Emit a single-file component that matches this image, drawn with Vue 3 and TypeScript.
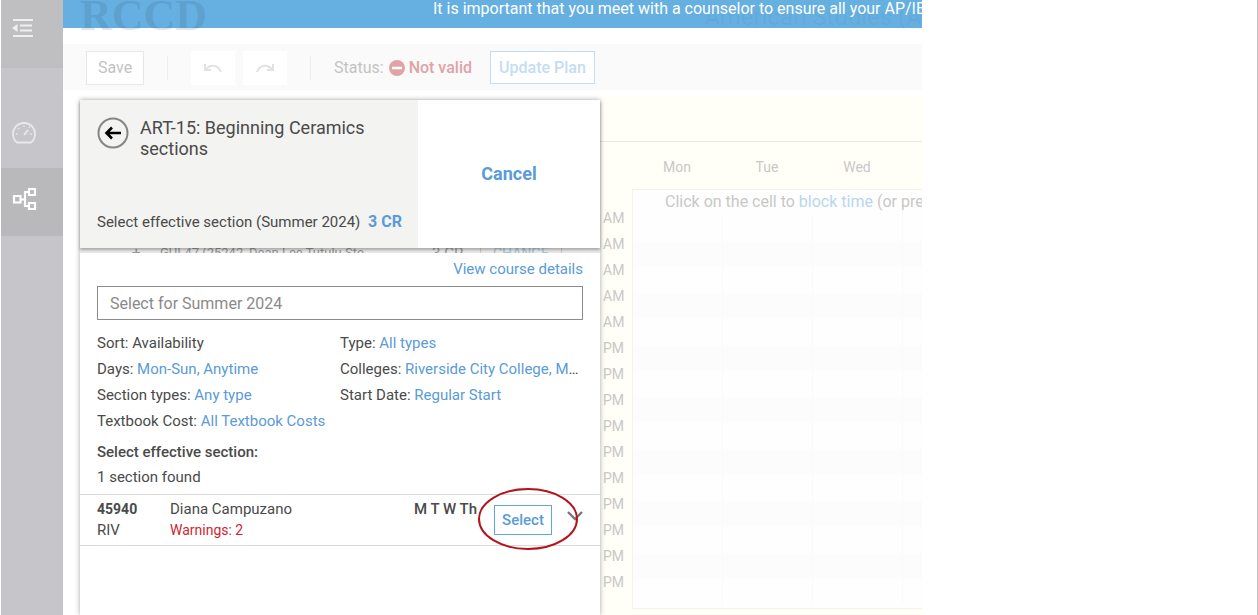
<script setup lang="ts">
import { ref } from 'vue'

interface Filter {
  label: string
  value: string
  link: boolean
}

const leftFilters: Filter[] = [
  { label: 'Sort:', value: 'Availability', link: false },
  { label: 'Days:', value: 'Mon-Sun, Anytime', link: true },
  { label: 'Section types:', value: 'Any type', link: true },
  { label: 'Textbook Cost:', value: 'All Textbook Costs', link: true },
]
const rightFilters: Filter[] = [
  { label: 'Type:', value: 'All types', link: true },
  { label: 'Colleges:', value: 'Riverside City College, Moreno Valley College', link: true },
  { label: 'Start Date:', value: 'Regular Start', link: true },
]
const hours: string[] = [...Array(5).fill('AM'), ...Array(10).fill('PM')]
const days: string[] = ['Mon', 'Tue', 'Wed', '']
const query = ref('')
</script>

<template>
  <div class="app">
    <nav class="sidebar" aria-label="Main">
      <button class="nav menu" aria-label="Collapse menu">
        <svg width="22" height="20" viewBox="0 0 22 20" fill="none" stroke="#efeff1" stroke-width="1.8">
          <path d="M1 2h20M8 7.500h12M8 12.500h12M1 18h20" />
          <path d="M5.500 6v8L0 10z" fill="#efeff1" stroke="none" />
        </svg>
      </button>
      <button class="nav gauge" aria-label="Dashboard">
        <svg width="24" height="24" viewBox="0 0 24 24" fill="none" stroke="#e9e9ec" stroke-width="1.8">
          <path d="M5 21.500A11 11 0 1 1 19 21.500z" stroke-linejoin="round" />
          <path d="M12 14l4-5" stroke-width="2" />
          <path d="M4 13h1.500M6 7l1 1M12 4.500v1.500M17 6.500l1-1M18.500 13H20" stroke-width="1.400" />
        </svg>
      </button>
      <button class="nav plan" aria-label="Plan">
        <svg width="26" height="24" viewBox="0 0 26 24" fill="none" stroke="#fff" stroke-width="2.200">
          <path d="M2 9h6.500v6.500H2zM17 2h6v6h-6zM17 16h6v6h-6zM8.500 12.500H13M17 5h-4v14h4" />
        </svg>
      </button>
    </nav>

    <main class="workspace">
      <header class="masthead">
        <div class="brand">RCCD</div>
        <div class="program">American Studies (A</div>
        <div class="banner">It is important that you meet with a counselor to ensure all your AP/IB</div>
      </header>

      <div class="toolbar">
        <button class="save">Save</button>
        <span class="rule"></span>
        <button class="history" aria-label="Undo">
          <svg width="20" height="10" viewBox="0 0 20 10" fill="none" stroke="#e2e2e2" stroke-width="2">
            <path d="M2 1v6h6M2.500 6.500C7 1 15 1 18 9" />
          </svg>
        </button>
        <button class="history" aria-label="Redo">
          <svg width="20" height="10" viewBox="0 0 20 10" fill="none" stroke="#e2e2e2" stroke-width="2">
            <path d="M18 1v6h-6M17.500 6.500C13 1 5 1 2 9" />
          </svg>
        </button>
        <span class="rule"></span>
        <span class="status">Status:</span>
        <svg class="stop" width="16" height="16" viewBox="0 0 16 16">
          <circle cx="8" cy="8" r="8" fill="#e2a3a6" />
          <path d="M3 8h10" stroke="#fff" stroke-width="2.500" />
        </svg>
        <strong class="invalid">Not valid</strong>
        <button class="update">Update Plan</button>
      </div>

      <div class="body">
        <section class="panel" aria-label="Course sections">
          <div class="head">
            <div class="course">
              <button class="back" aria-label="Back">
                <svg width="32" height="32" viewBox="0 0 32 32" fill="none">
                  <circle cx="16" cy="16" r="14.500" stroke="#858585" stroke-width="2" />
                  <path d="M24 16H10M15 10.500L9.500 16l5.500 5.500" stroke="#000" stroke-width="2.600" />
                </svg>
              </button>
              <h1>ART-15: Beginning Ceramics sections</h1>
              <p class="effective">Select effective section (Summer 2024) <b>3 CR</b></p>
            </div>
            <button class="cancel">Cancel</button>
          </div>
          <div class="peek">
            <span class="plus">+</span>
            <span class="peek-name">GUI-47 (25242, Dean Lee Tutulu Ste</span>
            <span class="peek-credit">3 CR</span>
            <span class="peek-change">CHANGE</span>
          </div>
          <div class="sheet">
            <a class="details" href="#">View course details</a>
            <input v-model="query" class="search" type="text" aria-label="Select for Summer 2024" placeholder="Select for Summer 2024" />
            <div class="filters">
              <div v-for="(group, g) in [leftFilters, rightFilters]" :key="g" class="group">
                <div v-for="f in group" :key="f.label" class="filter">
                  {{ f.label }}
                  <a v-if="f.link" href="#">{{ f.value }}</a>
                  <span v-else>{{ f.value }}</span>
                </div>
              </div>
            </div>
            <h2>Select effective section:</h2>
            <p class="found">1 section found</p>
            <div class="row">
              <div class="number"><b>45940</b><br />RIV</div>
              <div class="teacher">Diana Campuzano<br /><span class="warn">Warnings: 2</span></div>
              <b class="meets">M T W Th</b>
              <div class="pick">
                <button class="select">Select</button>
                <svg class="ring" width="102" height="64" viewBox="0 0 102 64" fill="none" aria-hidden="true">
                  <ellipse cx="51" cy="32" rx="49" ry="30" stroke="#b5121b" stroke-width="2" />
                </svg>
              </div>
              <button class="expand" aria-label="Show details">
                <svg width="16" height="10" viewBox="0 0 16 10" fill="none" stroke="#777" stroke-width="2.400">
                  <path d="M1 1l7 7 7-7" />
                </svg>
              </button>
            </div>
          </div>
        </section>

        <section class="calendar" aria-label="Week">
          <div class="weekbar"></div>
          <div class="days"><span v-for="(d, i) in days" :key="i">{{ d }}</span></div>
          <div class="schedule">
            <div class="hours"><span v-for="(h, i) in hours" :key="i">{{ h }}</span></div>
            <div class="cells">
              <p class="hint">Click on the cell to <a href="#">block time</a> (or pre</p>
              <div v-for="(h, i) in hours" :key="i" class="line"><i v-for="n in 4" :key="n"></i></div>
            </div>
          </div>
        </section>
      </div>
    </main>
    <aside class="blank"></aside>
  </div>
</template>

<style>
body {
  margin: 0;
  background: #fff;
}
</style>

<style scoped>
.app {
  display: grid;
  grid-template-columns: 62px minmax(0, 859fr) minmax(0, 336fr);
  height: 100vh;
  overflow: hidden;
  padding-left: 1px;
  box-sizing: border-box;
  font: 15px/20px Roboto, sans-serif;
  color: #4a4a4a;
}
.app * {
  box-sizing: border-box;
}
button {
  font: inherit;
  padding: 0;
  border: 0;
  background: none;
}
svg {
  display: block;
}
a {
  color: #5a9bd8;
  text-decoration: none;
}
h1,
h2,
p {
  margin: 0;
}
.sidebar {
  display: flex;
  flex-direction: column;
  background: #c5c5ca;
}
.nav {
  display: flex;
  align-items: center;
  height: 68px;
  padding-left: 11px;
}
.menu {
  background: #bfbfc2;
  padding: 0 0 12px 11px;
}
.gauge {
  margin-top: 32px;
  padding-bottom: 2px;
}
.plan {
  background: #b9b9bb;
  padding: 0 0 6px 11px;
}
.workspace {
  display: flex;
  flex-direction: column;
  min-width: 0;
  overflow: hidden;
}
.masthead {
  position: relative;
  flex: none;
  height: 44px;
}
.banner {
  height: 28px;
  padding-left: 370px;
  background: #65afe1;
  color: #fff;
  font-size: 16px;
  line-height: 17px;
  white-space: nowrap;
  overflow: hidden;
}
.brand,
.program {
  position: absolute;
  white-space: nowrap;
}
.brand {
  left: 17px;
  top: -6px;
  color: rgba(60, 90, 110, 0.17);
  font: 700 44px/44px "Liberation Serif", serif;
}
.program {
  right: 0;
  top: 4px;
  color: rgba(60, 90, 110, 0.06);
  font-size: 24px;
  line-height: 26px;
}
.toolbar {
  display: flex;
  flex: none;
  align-items: center;
  height: 46px;
  padding: 1px 0 0 23px;
  background: #fafafb;
  font-size: 16px;
  color: #c3c3c3;
  white-space: nowrap;
}
.save {
  width: 58px;
  height: 34px;
  border: 1px solid #e6e6e6;
  background: #fff;
  color: #c3c3c3;
}
.rule {
  width: 1px;
  height: 24px;
  margin: 0 23px;
  background: #eee;
}
.history {
  display: grid;
  place-items: center;
  width: 44px;
  height: 34px;
  background: #fff;
}
.history + .history {
  margin-left: 8px;
}
.stop {
  margin: 0 4px 0 5px;
}
.invalid {
  color: #e0a3a6;
  font-weight: 500;
}
.update {
  width: 105px;
  height: 33px;
  margin-left: 18px;
  border: 1px solid #c5ddf0;
  background: #fff;
  color: #c5ddf0;
  font-weight: 500;
}
.body {
  display: flex;
  flex: 1;
  min-height: 0;
}
.panel {
  display: flex;
  flex: none;
  flex-direction: column;
  width: 520px;
  margin: 10px 0 0 17px;
  z-index: 1;
  box-shadow: 0 0 5px rgba(0, 0, 0, 0.35);
}
.head {
  display: flex;
  flex: none;
  height: 148px;
  background: #fff;
  z-index: 1;
  box-shadow: 0 2px 3px rgba(0, 0, 0, 0.3);
}
.course {
  display: grid;
  grid-template: 1fr auto / 43px 1fr;
  width: 338px;
  padding: 17px 0 16px 17px;
  background: #f3f3f1;
}
h1 {
  height: 38px;
  overflow: hidden;
  padding-right: 40px;
  font-size: 18px;
  font-weight: 400;
  line-height: 21px;
}
.back {
  align-self: start;
  width: 32px;
}
.effective {
  grid-column: 1 / 3;
  white-space: nowrap;
}
.effective b {
  margin-left: 4px;
  color: #5a9bd8;
  font-size: 16px;
}
.cancel {
  flex: 1;
  color: #5a9bd8;
  font-size: 18px;
  font-weight: 700;
}
.peek {
  display: flex;
  flex: none;
  height: 5px;
  overflow: hidden;
  padding-left: 52px;
  background: #ececec;
  color: #999;
  line-height: 10px;
  white-space: nowrap;
}
.plus {
  width: 28px;
}
.peek-name {
  width: 272px;
  font-size: 13px;
}
.peek-credit {
  width: 48px;
}
.peek-change {
  padding: 0 12px;
  border: solid #ccc;
  border-width: 0 1px;
  color: #a9c4da;
  font-size: 14px;
}
.sheet {
  display: flex;
  flex: 1;
  flex-direction: column;
  min-height: 0;
  background: #fff;
}
.details {
  align-self: flex-end;
  margin: 6px 17px 7px 0;
}
.search {
  flex: none;
  height: 34px;
  margin: 0 17px 10px;
  padding: 0 12px;
  border: 1px solid #8c8c8c;
  font: 16px/20px Roboto, sans-serif;
  color: #4a4a4a;
}
.search::placeholder {
  color: #8a8a8a;
  opacity: 1;
}
.filters {
  display: grid;
  grid-template-columns: 243px minmax(0, 1fr);
  padding: 0 20px 0 17px;
}
.filter {
  height: 26px;
  line-height: 26px;
  overflow: hidden;
  text-overflow: ellipsis;
  white-space: nowrap;
}
h2 {
  margin: 8px 17px 5px;
  font-size: 15px;
  line-height: 20px;
  font-weight: 500;
}
.found {
  margin: 0 17px 7px;
}
.row {
  display: flex;
  flex: none;
  height: 52px;
  padding: 4px 0 0 17px;
  border: solid #d9d9d9;
  border-width: 1px 0;
  line-height: 21px;
}
.number {
  width: 73px;
}
.number b {
  font-size: 14px;
}
.teacher {
  width: 244px;
}
.warn {
  color: #d0252f;
  font-size: 14px;
}
.meets {
  width: 80px;
  font-weight: 500;
}
.pick {
  position: relative;
  margin-top: 6px;
}
.select {
  width: 58px;
  height: 30px;
  border: 1px solid #5fa8de;
  color: #5a9bd8;
  font-size: 15px;
  font-weight: 500;
}
.ring {
  position: absolute;
  left: -17px;
  top: -18px;
}
.expand {
  align-self: flex-start;
  margin: 12px 0 0 15px;
}
.calendar {
  flex: 1;
  min-width: 0;
  margin-top: 7px;
  overflow: hidden;
  background: #fffff8;
  color: #c8c8c6;
  font-size: 14px;
}
.weekbar {
  height: 45px;
  border-bottom: 1px solid #e9e9e2;
}
.days {
  display: grid;
  grid-template-columns: repeat(4, 90px);
  padding-left: 32px;
  height: 47px;
  line-height: 50px;
  text-align: center;
}
.schedule {
  display: flex;
}
.hours {
  display: flex;
  flex: none;
  flex-direction: column;
  width: 32px;
  padding: 16px 0 0 3px;
}
.hours span {
  height: 26px;
  line-height: 26px;
}
.cells {
  flex: none;
  width: 360px;
  height: 420px;
  overflow: hidden;
  border: solid #f4f4ea;
  border-width: 1px 0 1px 1px;
  background: #fefefe;
}
.hint {
  height: 25px;
  padding-left: 32px;
  font-size: 16px;
  line-height: 24px;
  white-space: nowrap;
}
.hint a {
  color: #b9d6ee;
}
.line {
  display: grid;
  grid-template-columns: repeat(4, 90px);
  height: 26px;
}
.line:nth-child(odd) {
  background: #fcfcfc;
}
.line i {
  border-right: 1px solid #fafafa;
}
.blank {
  border-right: 1px solid #c4c4c4;
  background: #fff;
}
</style>
